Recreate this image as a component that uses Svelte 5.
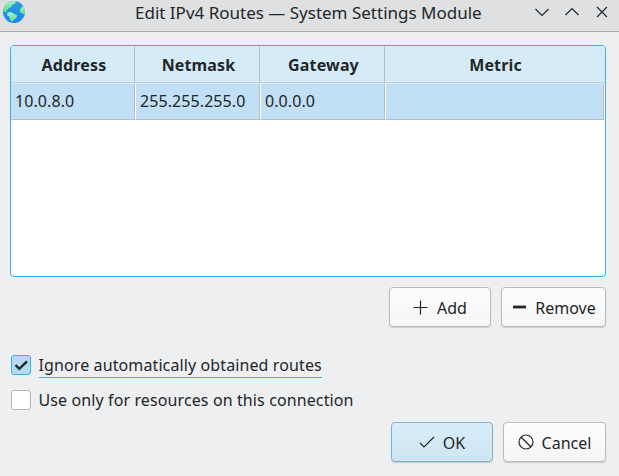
<script>
  const columns = ['Address', 'Netmask', 'Gateway', 'Metric'];
  const routes = [['10.0.8.0', '255.255.255.0', '0.0.0.0', '']];
  let ignoreRoutes = $state(true);
  let onlyConnection = $state(false);
</script>

<div class="window">
  <header class="titlebar">
    <svg class="globe" width="24" height="24" viewBox="0 0 24 24">
      <defs>
        <linearGradient id="sea" x1="0" y1="0" x2="0" y2="1">
          <stop offset="0" stop-color="#2b9fd6" />
          <stop offset="1" stop-color="#1b84f0" />
        </linearGradient>
        <linearGradient id="land" x1="0" y1="0" x2="0" y2="1">
          <stop offset="0" stop-color="#a5f3cd" />
          <stop offset="1" stop-color="#62dc86" />
        </linearGradient>
        <clipPath id="disc"><circle cx="12" cy="12" r="11" /></clipPath>
      </defs>
      <circle cx="12" cy="12" r="11" fill="url(#sea)" />
      <g clip-path="url(#disc)" fill="url(#land)">
        <path d="M0 11 1 6 6 1 11 0 14 2 12.500 4 10.500 4.500 9 7 6.500 8 6 10 4 10 5 12 3 12Z" />
        <path d="M5.500 12.500 9 12 12 14 15 15 14.500 18 11.500 20 10.500 22 8 20 7.500 17 5 15Z" />
        <path d="M19 8 21 6 24 8V14L21 14 18 12 18 9.500Z" />
      </g>
    </svg>
    <h1>Edit IPv4 Routes — System Settings Module</h1>
    <div class="controls">
      <svg viewBox="0 0 16 16"><path d="M1.500 5 8 11.500 14.500 5" /></svg>
      <svg viewBox="0 0 16 16"><path d="M1.500 11 8 4.500 14.500 11" /></svg>
      <svg viewBox="0 0 16 16"><path d="M3 3 13 13M13 3 3 13" /></svg>
    </div>
  </header>

  <main>
    <div class="table">
      <div class="row head">
        {#each columns as column}
          <div class="cell">{column}</div>
        {/each}
      </div>
      {#each routes as route}
        <div class="row selected">
          {#each route as value}
            <div class="cell">{value}</div>
          {/each}
        </div>
      {/each}
    </div>

    <div class="actions">
      <button class="add">
        <svg width="16" height="16" viewBox="0 0 16 16"><path d="M8.500 1.500V15.500M1.500 8.500H15.500" /></svg>
        <span>Add</span>
      </button>
      <button class="remove">
        <svg width="16" height="16" viewBox="0 0 16 16"><path d="M2 8H15" stroke-width="2.800" /></svg>
        <span>Remove</span>
      </button>
    </div>

    <div class="options">
      <label class:focused={ignoreRoutes}>
        <input type="checkbox" bind:checked={ignoreRoutes} />
        <i class="box">{#if ignoreRoutes}<svg width="18" height="18" viewBox="0 0 18 18"><path d="M3.500 9 7.300 12.800 15 5.300" /></svg>{/if}</i>
        <span class="ignore">Ignore automatically obtained routes</span>
      </label>
      <label>
        <input type="checkbox" bind:checked={onlyConnection} />
        <i class="box">{#if onlyConnection}<svg width="18" height="18" viewBox="0 0 18 18"><path d="M3.500 9 7.300 12.800 15 5.300" /></svg>{/if}</i>
        <span>Use only for resources on this connection</span>
      </label>
    </div>

    <div class="dialog-buttons">
      <button class="ok">
        <svg width="16" height="16" viewBox="0 0 16 16"><path d="M1 9 5 13 15 3" /></svg>
        <span>OK</span>
      </button>
      <button class="cancel">
        <svg width="16" height="16" viewBox="0 0 16 16"><circle cx="8" cy="8" r="7" /><path d="M3 3 13 13" /></svg>
        <span>Cancel</span>
      </button>
    </div>
  </main>
</div>

<style>
  .window {
    width: 619px;
    height: 476px;
    overflow: hidden;
    background: #eeeff1;
    color: #232629;
    font: 16px/22px "Noto Sans", sans-serif;
  }
  .titlebar {
    box-sizing: border-box;
    height: 32px;
    display: flex;
    align-items: flex-start;
    background: #dee0e2;
    border-bottom: 1px solid #a9abac;
    padding: 0 9px 0 2px;
  }
  .globe {
    overflow: visible;
  }
  h1 {
    flex: 1;
    margin: 2px 0 0 109px;
    font-size: 17px;
    font-weight: 400;
    line-height: 22px;
    white-space: nowrap;
  }
  .controls {
    display: flex;
    gap: 14px;
    padding-top: 4px;
  }
  .controls svg {
    width: 16px;
    height: 16px;
  }
  .controls path, button svg, .box path {
    fill: none;
    stroke: #232629;
    stroke-width: 1.2;
  }
  main {
    padding: 13px 13px 0 10px;
  }
  .table {
    box-sizing: border-box;
    width: 596px;
    height: 232px;
    border: 1px solid #3daee9;
    border-radius: 4px;
    background: #fff;
    overflow: hidden;
  }
  .row {
    display: grid;
    grid-template-columns: 124px 125px 125px 1fr;
  }
  .cell {
    box-sizing: border-box;
    white-space: nowrap;
  }
  .head {
    height: 38px;
    background: #d6ebf8;
    font-weight: 700;
    text-align: center;
  }
  .head .cell {
    height: 37px;
    padding-left: 3px;
    border-bottom: 1px solid #bdcfda;
    border-right: 1px solid #adbec9;
    letter-spacing: 0.15px;
    line-height: 38px;
  }
  .head .cell:last-child {
    border-right: 0;
    padding-left: 1px;
  }
  .selected {
    height: 36px;
    padding-right: 1px;
    background: #fff;
  }
  .selected .cell {
    background: #c1dff5;
    border-right: 1px solid #b9bcbe;
    border-bottom: 1px solid #b9bcbe;
    border-left: 1px solid #fff;
    padding-left: 4px;
    letter-spacing: 0.08px;
    line-height: 35px;
  }
  .selected .cell:first-child {
    border-left-color: #c1dff5;
    padding-left: 3px;
  }
  .actions, .dialog-buttons {
    display: flex;
    justify-content: flex-end;
    gap: 10px;
  }
  .actions {
    padding-top: 10px;
  }
  button {
    box-sizing: border-box;
    display: flex;
    align-items: center;
    justify-content: center;
    gap: 8px;
    width: 102px;
    height: 40px;
    padding: 0;
    border: 1px solid #b9bbbc;
    border-radius: 4px;
    background: linear-gradient(#fdfdfd, #f5f5f5);
    box-shadow: 0 1px 1px #c8cacc;
    color: inherit;
    font: inherit;
  }
  button span {
    padding-top: 2px;
  }
  .add {
    gap: 9px;
    padding-right: 1px;
  }
  .remove {
    width: 105px;
  }
  .cancel {
    width: 103px;
  }
  .ok {
    border-color: #7fb2cc;
    background: linear-gradient(#d8edf9, #cee6f2);
  }
  .options {
    display: flex;
    flex-direction: column;
    gap: 13px;
    padding-top: 27px;
  }
  label {
    display: flex;
    align-items: center;
    height: 22px;
    padding-left: 1px;
    gap: 7.5px;
    letter-spacing: 0.11px;
  }
  input {
    display: none;
  }
  .box {
    box-sizing: border-box;
    display: block;
    width: 20px;
    height: 20px;
    border: 1px solid #b4b6b8;
    border-radius: 3px;
    background: #fff;
  }
  .focused .box {
    border-color: #3daee9;
    background: #b5daf0;
  }
  .box svg {
    display: block;
  }
  .box path {
    stroke-width: 2.4;
  }
  .focused span {
    box-shadow: 0 1px 0 #eeeff1, 0 2px 0 #3daee9;
  }
  .dialog-buttons {
    padding-top: 11px;
  }
</style>
